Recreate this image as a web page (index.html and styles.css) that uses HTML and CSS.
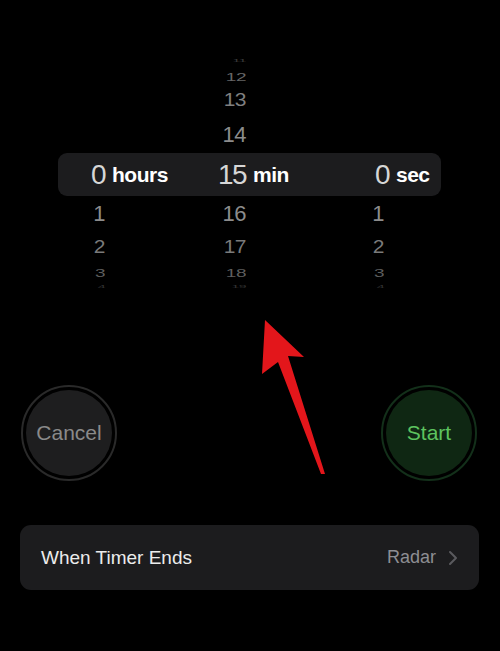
FILE: index.html
```html
<!DOCTYPE html>
<html>
<head>
<meta charset="utf-8">
<link rel="stylesheet" href="styles.css">
</head>
<body>
<div class="screen">
  <div class="picker">
    <div class="row r11"><span></span><span></span><span class="num">11</span><span></span><span></span><span></span></div>
    <div class="row r12"><span></span><span></span><span class="num">12</span><span></span><span></span><span></span></div>
    <div class="row r13"><span></span><span></span><span class="num">13</span><span></span><span></span><span></span></div>
    <div class="row r14"><span></span><span></span><span class="num">14</span><span></span><span></span><span></span></div>
    <div class="row sel">
      <span class="num">0</span><span class="lbl">hours</span>
      <span class="num">15</span><span class="lbl">min</span>
      <span class="num">0</span><span class="lbl">sec</span>
    </div>
    <div class="row r16"><span class="num">1</span><span></span><span class="num">16</span><span></span><span class="num">1</span><span></span></div>
    <div class="row r17"><span class="num">2</span><span></span><span class="num">17</span><span></span><span class="num">2</span><span></span></div>
    <div class="row r18"><span class="num">3</span><span></span><span class="num">18</span><span></span><span class="num">3</span><span></span></div>
    <div class="row r19"><span class="num">4</span><span></span><span class="num">19</span><span></span><span class="num">4</span><span></span></div>
  </div>

  <div class="buttons">
    <div class="btn cancel"><span>Cancel</span></div>
    <div class="btn start"><span>Start</span></div>
  </div>

  <div class="card">
    <span class="card-title">When Timer Ends</span>
    <span class="card-value">Radar
      <svg class="chev" width="10" height="16" viewBox="0 0 10 16"><path d="M2 2 L8 8 L2 14" fill="none" stroke="#5a5a5e" stroke-width="2" stroke-linecap="round" stroke-linejoin="round"/></svg>
    </span>
  </div>

  <svg class="arrow" width="500" height="651" viewBox="0 0 500 651">
    <polygon points="265,320 304,357 288,356 325,474 321,474 278,362 262,374" fill="#e3161b"/>
  </svg>
</div>
</body>
</html>
```

FILE: styles.css
```css
html, body {
  margin: 0;
  padding: 0;
  background: #000;
}
.screen {
  position: relative;
  width: 500px;
  height: 651px;
  overflow: hidden;
  font-family: "Liberation Sans", Arial, sans-serif;
  color: #fff;
}
.picker {
  padding-top: 54px;
  display: flex;
  flex-direction: column;
}
.row {
  display: grid;
  grid-template-columns: 105px 95px 46px 94px 44px 1fr;
  align-items: center;
  color: #8e8e8e;
  font-size: 22px;
}
.row .num {
  text-align: right;
  letter-spacing: -0.5px;
}
.r11 { height: 12px; font-size: 14px; color: #3a3a3a; overflow: hidden; line-height: 4px; }
.r11 .num { transform: scaleY(0.3); }
.r12 { height: 18px; font-size: 19px; color: #666; }
.r12 .num { transform: scaleY(0.62); }
.r13 { height: 32px; font-size: 21px; color: #808080; }
.r13 .num { transform: scaleY(0.88); }
.r14 { height: 37px; font-size: 22px; color: #8c8c8c; }
.sel {
  height: 43px;
  margin: 0 59px 0 58px;
  background: #1c1c1e;
  border-radius: 9px;
  grid-template-columns: 47px 113px 28px 118px 25px 1fr;
}
.sel .num {
  font-size: 28px;
  color: #d6d6d6;
  letter-spacing: -1.5px;
}
.sel .lbl {
  font-size: 21px;
  font-weight: bold;
  color: #fff;
  padding-left: 7px;
  letter-spacing: -0.5px;
}
.r16 { height: 36px; font-size: 22px; color: #8c8c8c; }
.r17 { height: 30px; font-size: 21px; color: #7a7a7a; }
.r17 .num { transform: scaleY(0.85); }
.r18 { height: 20px; font-size: 19px; color: #5e5e5e; }
.r18 .num { transform: scaleY(0.6); }
.r19 { height: 10px; font-size: 14px; color: #333; overflow: hidden; line-height: 4px; }
.r19 .num { transform: scaleY(0.3); }

.buttons {
  display: flex;
  justify-content: space-between;
  padding: 0 23px 0 21px;
  margin-top: 93px;
}
.btn {
  width: 92px;
  height: 92px;
  border-radius: 50%;
  border: 2px solid #2a2a2a;
  padding: 3px;
  background-clip: content-box;
  box-sizing: content-box;
  display: flex;
  align-items: center;
  justify-content: center;
  font-size: 21px;
  width: 86px;
  height: 86px;
}
.cancel {
  background-color: #1e1e1f;
  border-color: #2a2a2a;
  color: #8a8a8a;
}
.start {
  background-color: #0f2713;
  border-color: #13301a;
  color: #5dc35f;
}
.card {
  margin: 44px 21px 0 20px;
  height: 65px;
  background: #1c1c1e;
  border-radius: 11px;
  display: flex;
  align-items: center;
  justify-content: space-between;
  padding: 0 21px 0 21px;
}
.card-title {
  font-size: 19px;
  color: #ececec;
}
.card-value {
  font-size: 18px;
  color: #8e8e93;
  display: flex;
  align-items: center;
  gap: 12px;
}
.arrow {
  position: absolute;
  left: 0;
  top: 0;
  pointer-events: none;
}
```
